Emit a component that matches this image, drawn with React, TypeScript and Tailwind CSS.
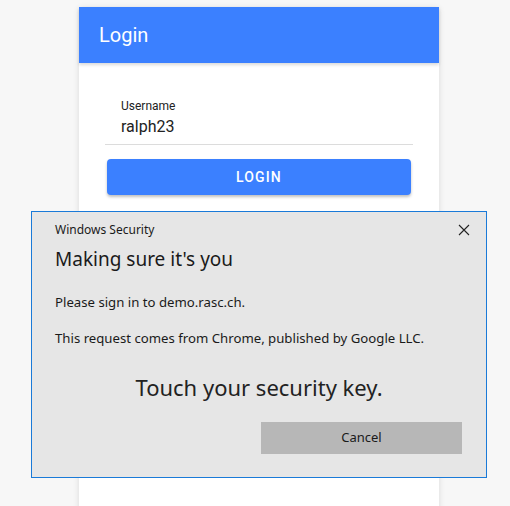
import React from 'react';

const LoginCard: React.FC = () => (
  <div className="ml-[79px] mt-[7px] w-[360px] min-h-[520px] bg-white shadow-[0_1px_6px_rgba(0,0,0,0.12)] font-['Roboto',sans-serif]">
    <div className="h-[56px] bg-[#3b80ff] flex items-center px-5 shadow-[0_2px_3px_rgba(0,0,0,0.15)]">
      <h1 className="text-[20px] text-white font-normal">Login</h1>
    </div>
    <div className="px-[26px] pt-[36px]">
      <div className="border-b border-[#dcdcdc] pl-4 pb-[6px]">
        <div className="text-[12px] leading-[14px] text-[#222]">Username</div>
        <div className="text-[16px] leading-[22px] mt-[3px] text-[#222]">ralph23</div>
      </div>
      <button className="mt-[14px] ml-[2px] w-[304px] h-[36px] rounded bg-[#3b80ff] text-white text-[14px] font-medium tracking-[0.08em] shadow-[0_2px_3px_rgba(0,0,0,0.25)]">
        LOGIN
      </button>
    </div>
  </div>
);

const SecurityDialog: React.FC = () => (
  <div className="absolute left-[31px] top-[211px] w-[456px] h-[267px] bg-[#e6e6e6] border border-[#1a7ad8] font-['Noto_Sans',sans-serif] text-[#1a1a1a]">
    <div className="flex items-center justify-between pl-[23px] pr-[16px] pt-[9px]">
      <span className="text-[12px]">Windows Security</span>
      <svg width="12" height="12" viewBox="0 0 12 12" className="text-[#222]">
        <path d="M1 1 L11 11 M11 1 L1 11" stroke="currentColor" strokeWidth="1.1" />
      </svg>
    </div>
    <div className="pl-[23px] pt-[7px] text-[19px] leading-[26px]">Making sure it's you</div>
    <div className="pl-[23px] pt-[20px] text-[13.2px] leading-[20px]">Please sign in to demo.rasc.ch.</div>
    <div className="pl-[23px] pt-[16px] text-[13.2px] leading-[20px]">This request comes from Chrome, published by Google LLC.</div>
    <div className="text-center pt-[24px] text-[22px] leading-[30px] text-[#222]">Touch your security key.</div>
    <div className="flex justify-end pr-[24px] pt-[20px]">
      <div className="w-[201px] h-[32px] bg-[#b7b7b7] flex items-center justify-center text-[13px]">Cancel</div>
    </div>
  </div>
);

export default function App() {
  return (
    <div className="relative w-[510px] h-[506px] overflow-hidden bg-[#f7f7f7]">
      <LoginCard />
      <SecurityDialog />
    </div>
  );
}
